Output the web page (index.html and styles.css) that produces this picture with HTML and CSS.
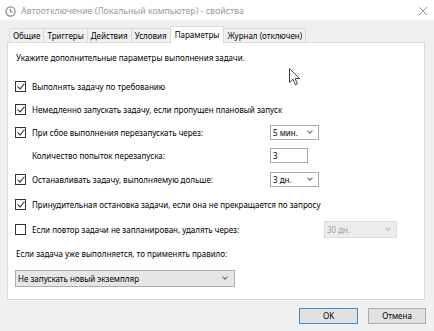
FILE: index.html
```html
<!DOCTYPE html>
<html lang="ru">
<head>
    <meta charset="UTF-8">
    <title>Автоотключение (Локальный компьютер) - свойства</title>
    <link rel="stylesheet" href="styles.css">
</head>
<body>
    <div class="window">
        <div class="titlebar">
            <svg class="app-icon" width="11" height="11" viewBox="0 0 11 11">
                <circle cx="5.5" cy="5.5" r="4.6" fill="none" stroke="#8a8a8a" stroke-width="1.2"/>
                <path d="M5.5 2.8 V5.7 H7.8" fill="none" stroke="#8a8a8a" stroke-width="1.1"/>
            </svg>
            <span class="title">Автоотключение (Локальный компьютер) - свойства</span>
            <svg class="close" width="10" height="10" viewBox="0 0 10 10">
                <path d="M1 1 L9 9 M9 1 L1 9" stroke="#9a9a9a" stroke-width="1"/>
            </svg>
        </div>

        <div class="dialog">
            <div class="tabs">
                <div class="tab">Общие</div>
                <div class="tab">Триггеры</div>
                <div class="tab">Действия</div>
                <div class="tab">Условия</div>
                <div class="tab active">Параметры</div>
                <div class="tab">Журнал (отключен)</div>
            </div>

            <div class="panel">
                <div class="intro">Укажите дополнительные параметры выполнения задачи.</div>

                <div class="options">
                    <div class="row">
                        <span class="check on"></span>
                        <span class="label">Выполнять задачу по требованию</span>
                    </div>
                    <div class="row">
                        <span class="check on"></span>
                        <span class="label wide">Немедленно запускать задачу, если пропущен плановый запуск</span>
                    </div>
                    <div class="row">
                        <span class="check on"></span>
                        <span class="label">При сбое выполнения перезапускать через:</span>
                        <span class="select short">5 мин.<i class="chev"></i></span>
                    </div>
                    <div class="row">
                        <span></span>
                        <span class="label">Количество попыток перезапуска:</span>
                        <span class="field">3</span>
                    </div>
                    <div class="row tall">
                        <span class="check on"></span>
                        <span class="label">Останавливать задачу, выполняемую дольше:</span>
                        <span class="select short">3 дн.<i class="chev"></i></span>
                    </div>
                    <div class="row tall">
                        <span class="check on"></span>
                        <span class="label wide">Принудительная остановка задачи, если она не прекращается по запросу</span>
                    </div>
                    <div class="row tall">
                        <span class="check"></span>
                        <span class="label">Если повтор задачи не запланирован, удалять через:</span>
                        <span class="select disabled">30 дн.<i class="chev"></i></span>
                    </div>
                </div>

                <div class="rule-label">Если задача уже выполняется, то применять правило:</div>
                <div class="select rule">Не запускать новый экземпляр<i class="chev"></i></div>
            </div>

            <div class="buttons">
                <button class="btn default">OK</button>
                <button class="btn">Отмена</button>
            </div>
        </div>

        <svg class="cursor" width="12" height="18" viewBox="0 0 12 18">
            <path d="M0.5 0.5 V14.5 L4 11.2 L6.4 16.8 L8.4 15.9 L6.1 10.5 H10.6 Z" fill="#fff" stroke="#444" stroke-width="1"/>
        </svg>
    </div>
</body>
</html>
```

FILE: styles.css
```css
* {
    box-sizing: border-box;
}
body {
    margin: 0;
    font-family: "Noto Sans", "Open Sans", sans-serif;
    font-size: 8px;
    color: #000;
}
.window {
    position: relative;
    width: 434px;
    height: 331px;
    overflow: hidden;
    background: #f0f0f0;
}
.titlebar {
    height: 20px;
    background: #fff;
    display: flex;
    align-items: center;
    padding-left: 5px;
    padding-right: 6px;
    padding-top: 2px;
}
.app-icon {
    margin-right: 5px;
}
.title {
    color: #9a9a9a;
    font-size: 8.8px;
    flex: 1;
}
.dialog {
    padding: 5px 9px 0 7px;
}
.tabs {
    display: flex;
    align-items: flex-end;
    height: 17px;
    padding-left: 2px;
}
.tab {
    height: 14px;
    line-height: 13px;
    padding: 0 3px;
    border: 1px solid #d9d9d9;
    border-bottom: none;
    margin-right: -1px;
    background: #f0f0f0;
    white-space: nowrap;
}
.tab.active {
    height: 17px;
    line-height: 15px;
    background: #fff;
    position: relative;
    z-index: 1;
    margin-bottom: -1px;
    padding: 0 4px;
}
.panel {
    background: #fff;
    border: 1px solid #d9d9d9;
    height: 258px;
    padding: 7px 0 0 7px;
}
.intro {
    line-height: 15px;
    padding-left: 1px;
}
.options {
    margin-top: 10px;
}
.row {
    display: grid;
    grid-template-columns: 17px 238px auto;
    align-items: center;
    height: 23px;
}
.row.tall {
    height: 25px;
}
.label {
    white-space: nowrap;
}
.label.wide {
    grid-column: 2 / 4;
}
.check {
    width: 11px;
    height: 11px;
    border: 1px solid #333;
    background: #fff;
    position: relative;
}
.check.on::after {
    content: "";
    position: absolute;
    left: 3px;
    top: 0px;
    width: 3px;
    height: 6px;
    border-right: 1px solid #222;
    border-bottom: 1px solid #222;
    transform: rotate(40deg);
}
.select {
    position: relative;
    display: inline-block;
    height: 15px;
    line-height: 13px;
    padding-left: 2px;
    border: 1px solid #a9a9a9;
    background: #fff;
    white-space: nowrap;
}
.select.short {
    width: 49px;
}
.select.disabled {
    width: 73px;
    height: 17px;
    line-height: 15px;
    margin-left: 54px;
    background: #ececec;
    border-color: #dcdcdc;
    color: #a0a0a0;
}
.chev {
    position: absolute;
    right: 6px;
    top: 3px;
    width: 4px;
    height: 4px;
    border-right: 1px solid #666;
    border-bottom: 1px solid #666;
    transform: rotate(45deg);
}
.disabled .chev {
    border-color: #bbb;
    top: 4px;
}
.field {
    display: inline-block;
    width: 38px;
    height: 15px;
    line-height: 13px;
    padding-left: 2px;
    border: 1px solid #a9a9a9;
}
.rule-label {
    margin-top: 4px;
    line-height: 15px;
    padding-left: 1px;
}
.select.rule {
    display: block;
    width: 220px;
    height: 17px;
    line-height: 15px;
    margin-top: 9px;
    background: #e6e6e6;
    border-color: #adadad;
}
.rule .chev {
    top: 4px;
    right: 7px;
}
.buttons {
    display: flex;
    justify-content: flex-end;
    gap: 10px;
    margin-top: 8px;
    padding-right: 8px;
    margin-right: -9px;
}
.btn {
    font-family: inherit;
    font-size: 8px;
    color: #000;
    width: 58px;
    height: 16px;
    padding: 0;
    line-height: 14px;
    background: #e1e1e1;
    border: 1px solid #adadad;
}
.btn.default {
    width: 59px;
    border-color: #3c8ad0;
}
.cursor {
    position: absolute;
    left: 289px;
    top: 68px;
}
```
